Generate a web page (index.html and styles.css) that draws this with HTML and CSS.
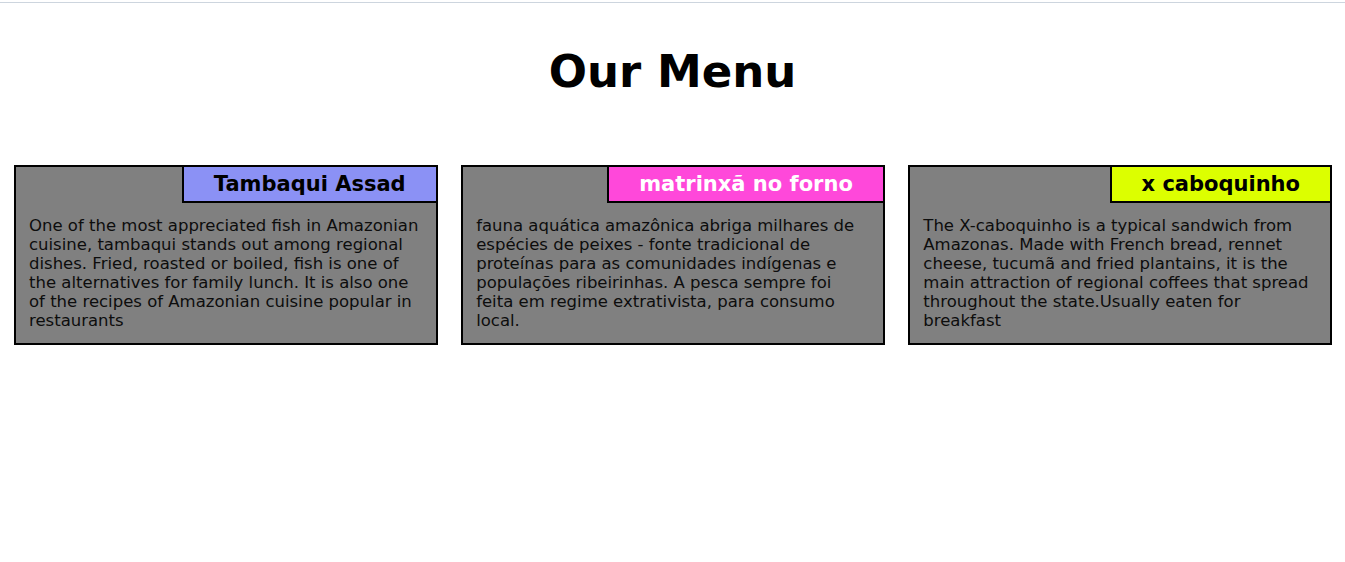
FILE: index.html
```html
<!DOCTYPE html>
<html lang="en">
<head>
<meta charset="utf-8">
<title>Our Menu</title>
<link rel="stylesheet" href="styles.css">
</head>
<body>
<div class="topline"></div>
<h1 class="page-title">Our Menu</h1>
<main class="menu">
  <article class="card">
    <div class="card-head"><h2 class="dish dish-blue">Tambaqui Assad</h2></div>
    <p class="desc">One of the most appreciated fish in Amazonian cuisine, tambaqui stands out among regional dishes. Fried, roasted or boiled, fish is one of the alternatives for family lunch. It is also one of the recipes of Amazonian cuisine popular in restaurants</p>
  </article>
  <article class="card">
    <div class="card-head"><h2 class="dish dish-pink">matrinxã no forno</h2></div>
    <p class="desc">fauna aquática amazônica abriga milhares de espécies de peixes - fonte tradicional de proteínas para as comunidades indígenas e populações ribeirinhas. A pesca sempre foi feita em regime extrativista, para consumo local.</p>
  </article>
  <article class="card">
    <div class="card-head"><h2 class="dish dish-yellow">x caboquinho</h2></div>
    <p class="desc">The X-caboquinho is a typical sandwich from Amazonas. Made with French bread, rennet cheese, tucumã and fried plantains, it is the main attraction of regional coffees that spread throughout the state.Usually eaten for breakfast</p>
  </article>
</main>
</body>
</html>
```
FILE: styles.css
```css
html, body {
  margin: 0;
  padding: 0;
  background: #ffffff;
}
body {
  font-family: "DejaVu Sans", Verdana, sans-serif;
  color: #000;
  padding-top: 2px;
}
.topline {
  height: 1px;
  background: #cdd5de;
}
.page-title {
  margin: 0;
  padding-top: 43px;
  font-size: 45px;
  line-height: 52px;
  font-weight: bold;
  text-align: center;
}
.menu {
  display: grid;
  grid-template-columns: repeat(3, 1fr);
  gap: 23.5px;
  padding: 0 13px 0 14px;
  margin-top: 67px;
}
.card {
  background: #808080;
  border: 2px solid #000;
}
.card-head {
  display: flex;
  justify-content: flex-end;
}
.dish {
  margin: 0;
  padding: 0 30px;
  height: 34px;
  line-height: 34px;
  font-size: 21px;
  font-weight: bold;
  border-left: 2px solid #000;
  border-bottom: 2px solid #000;
}
.dish-blue { background: #8b91f5; color: #000; }
.dish-pink { background: #ff48da; color: #fff; }
.dish-yellow { background: #dcff00; color: #000; }
.desc {
  margin: 0;
  padding: 13px 13px 13px 13px;
  font-size: 16.5px;
  line-height: 19px;
  color: #0d0d0d;
}
```
